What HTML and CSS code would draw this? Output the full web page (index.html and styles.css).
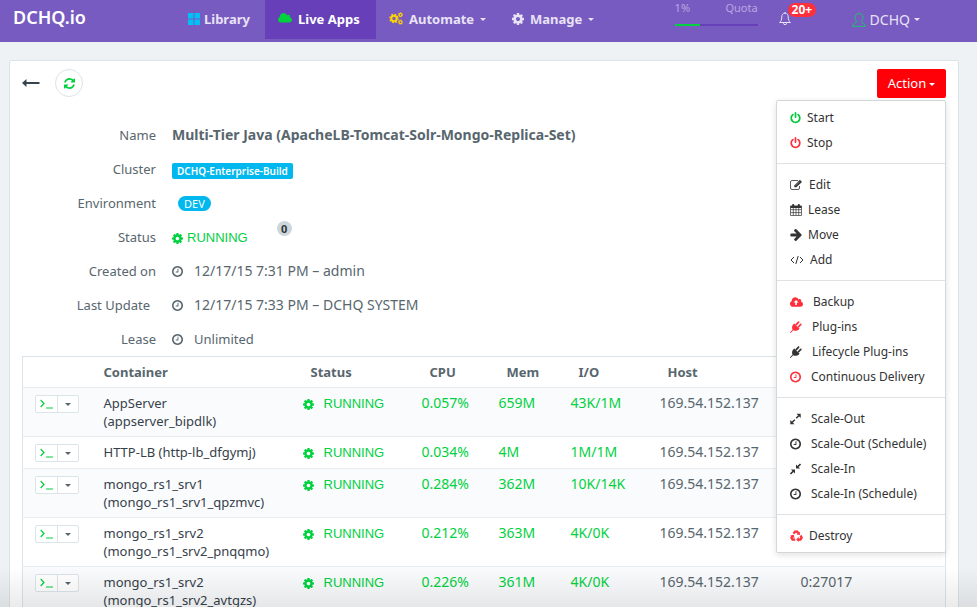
FILE: index.html
```html
<!DOCTYPE html>
<html lang="en">
<head>
<meta charset="utf-8">
<title>DCHQ.io - Live Apps</title>
<link rel="stylesheet" href="styles.css">
</head>
<body>
<svg class="sprite" aria-hidden="true">
  <symbol id="power" viewBox="128 0 1536 1792"><path d="M1664 896q0 156-61 298t-164 245-245 164-298 61-298-61-245-164-164-245-61-298q0-182 80.500-343t226.500-270q43-32 95.500-25t83.500 50q32 42 24.500 94.500t-49.500 84.500q-98 74-151.500 181t-53.500 228q0 104 40.500 198.500t109.500 163.500 163.500 109.500 198.500 40.500 198.500-40.500 163.500-109.500 109.500-163.500 40.500-198.500q0-121-53.500-228t-151.500-181q-42-32-49.500-84.500t24.500-94.500q31-43 84-50t95 25q146 109 226.500 270t80.500 343zm-640-768v640q0 52-38 90t-90 38-90-38-38-90v-640q0-52 38-90t90-38 90 38 38 90z"/></symbol>
  <symbol id="clock" viewBox="128 128 1536 1536"><path d="M1024 544v448q0 14-9 23t-23 9h-320q-14 0-23-9t-9-23v-64q0-14 9-23t23-9h224v-352q0-14 9-23t23-9h64q14 0 23 9t9 23zm416 352q0-148-73-273t-198-198-273-73-273 73-198 198-73 273 73 273 198 198 273 73 273-73 198-198 73-273zm224 0q0 209-103 385.500t-279.500 279.500-385.500 103-385.500-103-279.500-279.500-103-385.500 103-385.500 279.500-279.500 385.500-103 385.500 103 279.500 279.500 103 385.500z"/></symbol>
  <symbol id="cog" viewBox="128 128 1536 1536"><path d="M1152 896q0-106-75-181t-181-75-181 75-75 181 75 181 181 75 181-75 75-181zm512-109v222q0 12-8 23t-20 13l-185 28q-19 54-39 91 35 50 107 138 10 12 10 25t-9 23q-27 37-99 108t-94 71q-12 0-26-9l-138-108q-44 23-91 38-16 136-29 186-7 28-36 28h-222q-14 0-24.500-8.500t-11.500-21.500l-28-184q-49-16-90-37l-141 107q-10 9-25 9-14 0-25-11-126-114-165-168-7-10-7-23 0-12 8-23 15-21 51-66.500t54-70.500q-27-50-41-99l-183-27q-13-2-21-12.500t-8-23.500v-222q0-12 8-23t19-13l186-28q14-46 39-92-40-57-107-138-10-12-10-24 0-10 9-23 26-36 98.500-107.500t94.500-71.500q13 0 26 10l138 107q44-23 91-38 16-136 29-186 7-28 36-28h222q14 0 24.500 8.500t11.500 21.500l28 184q49 16 90 37l142-107q9-9 24-9 13 0 25 10 129 119 165 170 7 8 7 22 0 12-8 23-15 21-51 66.500t-54 70.500q26 50 41 98l183 28q13 2 21 12.500t8 23.500z"/></symbol>
  <symbol id="refresh" viewBox="128 128 1536 1536"><path d="M1639 1056q0 5-1 7-64 268-268 434.500t-478 166.500q-146 0-282.500-55t-243.500-157l-129 129q-19 19-45 19t-45-19-19-45v-448q0-26 19-45t45-19h448q26 0 45 19t19 45-19 45l-137 137q71 66 161 102t187 36q134 0 250-65t186-179q11-17 53-117 8-23 30-23h192q13 0 22.500 9.500t9.500 22.500zm25-800v448q0 26-19 45t-45 19h-448q-26 0-45-19t-19-45 19-45l138-138q-148-137-349-137-134 0-250 65t-186 179q-11 17-53 117-8 23-30 23h-199q-13 0-22.500-9.500t-9.500-22.500v-7q65-268 270-434.500t480-166.500q146 0 284 55.500t245 156.500l130-129q19-19 45-19t45 19 19 45z"/></symbol>
  <symbol id="arrow" viewBox="120 180 1490 1570"><path d="M1600 960q0 54-37 91l-651 651q-39 37-91 37-51 0-90-37l-75-75q-38-38-38-91t38-91l293-293h-704q-52 0-84.500-37.500t-32.500-90.500v-128q0-53 32.500-90.500t84.500-37.500h704l-293-294q-38-36-38-90t38-90l75-75q38-38 90-38 53 0 91 38l651 651q37 35 37 90z"/></symbol>
  <symbol id="cloud" viewBox="64 384 1920 1152"><path d="M1984 1152q0 159-112.500 271.500t-271.500 112.500h-1088q-185 0-316.500-131.500t-131.500-316.500q0-132 71-241.500t187-163.500q-2-28-2-43 0-212 150-362t362-150q158 0 286.500 88t187.500 230q70-62 166-62 106 0 181 75t75 181q0 75-41 138 129 30 213 134.500t84 239.500z" transform="translate(0 102) scale(1 .92)"/></symbol>
  <symbol id="upload" viewBox="64 128 1920 1408"><path fill-rule="evenodd" d="M1984 1152q0 159-112.500 271.500t-271.500 112.500h-1088q-185 0-316.500-131.500t-131.500-316.500q0-132 71-241.500t187-163.500q-2-28-2-43 0-212 150-362t362-150q158 0 286.500 88t187.500 230q70-62 166-62 106 0 181 75t75 181q0 75-41 138 129 30 213 134.500t84 239.500zM960 520L590 900h250v380h240V900h250z"/></symbol>
  <symbol id="edit" viewBox="0 0 13 12"><path d="M9.500 7v2a1.500 1.500 0 0 1-1.500 1.500H2A1.500 1.500 0 0 1 .500 9V3A1.500 1.500 0 0 1 2 1.500h6" fill="none" stroke="currentColor" stroke-width=".8"/><path d="M4.300 8.300V6.400L9.900.800 12 2.900 6.300 8.300z"/><path d="M5.700 6.600 9.700 2.600" stroke="#fff" stroke-width=".4"/></symbol>
  <symbol id="calendar" viewBox="0 0 12 12"><path d="M.500 2.200h11v9.300H.500zM.500 5.700h11M.500 8.600h11M3.300 4v7.500M6 4v7.500M8.700 4v7.500" fill="none" stroke="currentColor" stroke-width=".7"/><path d="M.500 1.700h11v2.300H.500z"/><rect x="2.200" width="2" height="3.500" rx=".8"/><rect x="7.800" width="2" height="3.500" rx=".8"/></symbol>
  <symbol id="code" viewBox="0 0 14 12"><path d="M4 3 1 6l3 3M10 3l3 3-3 3M8.200 2 5.800 10" fill="none" stroke="currentColor"/></symbol>
  <symbol id="plug" viewBox="0 0 12 12"><path d="M4.300 2.500 9.500 7.700C8 9.800 5.200 10.400 3.200 9.300L.8 11.700 0 11.900.300 11 2.500 8.700C1.500 6.600 2.200 4 4.300 2.500zM5.300 3.300 8 .6a.8.8 0 0 1 1.200 1.200L6.700 4.400zM7.600 5.400 10.200 2.800a.8.8 0 0 1 1.200 1.200L8.700 6.700z"/></symbol>
  <symbol id="expand" viewBox="0 0 11 11"><path d="M6.500.300H10.700V4.500zM.300 6.500V10.700H4.500z"/><path d="M2 9 4.800 6.200M6.200 4.800 9 2" stroke="currentColor" stroke-width="1.500"/></symbol>
  <symbol id="compress" viewBox="0 0 11 11"><path d="M6 .9V5h4.100zM5 10.100V6H.9z"/><path d="M.500 10.500 3.500 7.500M7.500 3.500 10.500.500" stroke="currentColor" stroke-width="1.600"/></symbol>
  <symbol id="recycle" viewBox="0 0 13 12"><g fill="none" stroke="currentColor" stroke-width="2.400"><path d="M3.600 3.600 5 1.600h2.200L8.300 3.200M10.600 5.400l1 2.200-1.200 2H8M5.200 9.600H2.600L1.500 7.700l.7-1.500"/></g><path d="M9.900 1.700v3.400L6.600 4.500zM8.700 7v5L6.200 9.600zM.300 5.600l3.400-.8.900 3.400z"/></symbol>
  <symbol id="cogs" viewBox="0 0 14 13"><g fill="none" stroke="currentColor"><circle cx="5" cy="6.500" r="2.700" stroke-width="2"/><circle cx="5" cy="6.500" r="4.100" stroke-width="1.400" stroke-dasharray="1.700 1.520"/><circle cx="11.500" cy="2.800" r="1.500" stroke-width="1.200"/><circle cx="11.500" cy="2.800" r="2.200" stroke-width=".6" stroke-dasharray="1 .73"/><circle cx="11.500" cy="10.200" r="1.500" stroke-width="1.200"/><circle cx="11.500" cy="10.200" r="2.200" stroke-width=".6" stroke-dasharray="1 .73"/></g></symbol>
  <symbol id="prompt" viewBox="0 0 13 10"><path d="M.700 1 4 4.500.700 8M6 9h7" fill="none" stroke="currentColor" stroke-width="1.200"/></symbol>
</svg>

<header class="topbar">
  <a class="brand" href="#">DCHQ.io</a>
  <nav class="nav" aria-label="Main">
    <a class="nav-item nav-library" href="#"><svg class="icon-windows" viewBox="0 0 12 12"><path d="M0 0h5.500v5.500H0zM6.500 0H12v5.500H6.500zM0 6.500h5.500V12H0zM6.500 6.500H12V12H6.500z"/></svg>Library</a>
    <a class="nav-item nav-apps active" href="#"><svg class="icon-cloud"><use href="#cloud"/></svg>Live Apps</a>
    <a class="nav-item nav-automate" href="#"><svg class="icon-cogs"><use href="#cogs"/></svg>Automate<span class="caret"></span></a>
    <a class="nav-item nav-manage" href="#"><svg class="icon"><use href="#cog"/></svg>Manage<span class="caret"></span></a>
  </nav>
  <div class="account">
    <div class="quota">
      <div class="quota-text"><span>1%</span><span>Quota</span></div>
      <div class="quota-bar"><div class="quota-used"></div></div>
    </div>
    <a class="alerts" href="#" aria-label="Alerts"><svg class="icon-bell" viewBox="0 0 12 14"><path d="M6 1.200C3.700 1.200 2.800 3 2.800 5c0 3-.9 4.400-2.200 5.500h10.800C10.100 9.400 9.200 8 9.200 5c0-2-.9-3.800-3.200-3.800zM4.500 11.200a1.500 1.500 0 0 0 3 0M6 0v1.200" fill="none" stroke="currentColor"/></svg><span class="alert-count">20+</span></a>
    <a class="user" href="#"><svg class="icon-user" viewBox="0 0 14 14"><path d="M5 8.600C3.700 7.300 3 6 3 4.200 3 2 4.700.600 7 .600s4 1.400 4 3.600c0 1.800-.7 3.100-2 4.400.1 1 4.300 1.600 4.400 4.800H.600C.700 10.200 4.900 9.600 5 8.600z" fill="none" stroke="currentColor"/></svg>DCHQ<span class="caret"></span></a>
  </div>
</header>

<main class="card">
  <div class="toolbar">
    <button class="back" type="button" aria-label="Back"><svg viewBox="0 0 18 8"><path d="M0 4 4.500 0v2.900H17.500v2.200H4.500V8z"/></svg></button>
    <button class="reload" type="button" aria-label="Refresh"><svg class="icon"><use href="#refresh"/></svg></button>
    <div class="action">
      <button class="action-button" type="button">Action<span class="caret"></span></button>
      <div class="menu">
        <div class="menu-group">
          <button type="button"><svg class="w11 ok"><use href="#power"/></svg>Start</button>
          <button type="button"><svg class="w11 danger"><use href="#power"/></svg>Stop</button>
        </div>
        <div class="menu-group">
          <button type="button"><svg class="w13"><use href="#edit"/></svg>Edit</button>
          <button type="button"><svg class="w12"><use href="#calendar"/></svg>Lease</button>
          <button type="button"><svg class="w12"><use href="#arrow"/></svg>Move</button>
          <button type="button"><svg class="w14"><use href="#code"/></svg>Add</button>
        </div>
        <div class="menu-group wide">
          <button type="button"><svg class="w13 danger"><use href="#upload"/></svg>Backup</button>
          <button type="button"><svg class="w12 danger"><use href="#plug"/></svg>Plug-ins</button>
          <button type="button"><svg class="w12"><use href="#plug"/></svg>Lifecycle Plug-ins</button>
          <button type="button"><svg class="w11 danger"><use href="#clock"/></svg>Continuous Delivery</button>
        </div>
        <div class="menu-group wide">
          <button type="button"><svg class="w11"><use href="#expand"/></svg>Scale-Out</button>
          <button type="button"><svg class="w11"><use href="#clock"/></svg>Scale-Out (Schedule)</button>
          <button type="button"><svg class="w11"><use href="#compress"/></svg>Scale-In</button>
          <button type="button"><svg class="w11"><use href="#clock"/></svg>Scale-In (Schedule)</button>
        </div>
        <div class="menu-group">
          <button type="button"><svg class="w13 danger"><use href="#recycle"/></svg>Destroy</button>
        </div>
      </div>
    </div>
  </div>

  <dl class="details">
    <dt>Name</dt><dd class="name">Multi-Tier Java (ApacheLB-Tomcat-Solr-Mongo-Replica-Set)</dd>
    <dt>Cluster</dt><dd><span class="cluster">DCHQ-Enterprise-Build</span></dd>
    <dt>Environment</dt><dd><span class="env">DEV</span></dd>
    <dt>Status</dt><dd class="state"><svg class="icon"><use href="#cog"/></svg><span>RUNNING</span><span class="count">0</span></dd>
    <dt>Created on</dt><dd class="time stamp"><svg class="icon"><use href="#clock"/></svg>12/17/15 7:31 PM – admin</dd>
    <dt class="trail">Last Update</dt><dd class="time stamp"><svg class="icon"><use href="#clock"/></svg>12/17/15 7:33 PM – DCHQ SYSTEM</dd>
    <dt>Lease</dt><dd class="time"><svg class="icon"><use href="#clock"/></svg>Unlimited</dd>
  </dl>

  <table class="containers">
    <colgroup><col class="c-tools"><col class="c-name"><col class="c-status"><col class="c-cpu"><col class="c-mem"><col class="c-io"><col class="c-host"><col></colgroup>
    <thead>
      <tr><th></th><th class="first">Container</th><th>Status</th><th>CPU</th><th>Mem</th><th>I/O</th><th>Host</th><th></th></tr>
    </thead>
    <tbody>
      <tr><td><div class="tools"><button type="button" aria-label="Terminal"><svg><use href="#prompt"/></svg></button><button type="button" aria-label="More"><span class="caret"></span></button></div></td><td class="cname">AppServer<br>(appserver_bipdlk)</td><td class="run"><svg class="icon"><use href="#cog"/></svg>RUNNING</td><td class="num">0.057%</td><td class="num">659M</td><td class="num">43K/1M</td><td>169.54.152.137</td><td></td></tr>
      <tr><td><div class="tools"><button type="button" aria-label="Terminal"><svg><use href="#prompt"/></svg></button><button type="button" aria-label="More"><span class="caret"></span></button></div></td><td class="cname">HTTP-LB (http-lb_dfgymj)</td><td class="run"><svg class="icon"><use href="#cog"/></svg>RUNNING</td><td class="num">0.034%</td><td class="num">4M</td><td class="num">1M/1M</td><td>169.54.152.137</td><td></td></tr>
      <tr><td><div class="tools"><button type="button" aria-label="Terminal"><svg><use href="#prompt"/></svg></button><button type="button" aria-label="More"><span class="caret"></span></button></div></td><td class="cname">mongo_rs1_srv1<br>(mongo_rs1_srv1_qpzmvc)</td><td class="run"><svg class="icon"><use href="#cog"/></svg>RUNNING</td><td class="num">0.284%</td><td class="num">362M</td><td class="num">10K/14K</td><td>169.54.152.137</td><td></td></tr>
      <tr><td><div class="tools"><button type="button" aria-label="Terminal"><svg><use href="#prompt"/></svg></button><button type="button" aria-label="More"><span class="caret"></span></button></div></td><td class="cname">mongo_rs1_srv2<br>(mongo_rs1_srv2_pnqqmo)</td><td class="run"><svg class="icon"><use href="#cog"/></svg>RUNNING</td><td class="num">0.212%</td><td class="num">363M</td><td class="num">4K/0K</td><td>169.54.152.137</td><td></td></tr>
      <tr><td><div class="tools"><button type="button" aria-label="Terminal"><svg><use href="#prompt"/></svg></button><button type="button" aria-label="More"><span class="caret"></span></button></div></td><td class="cname">mongo_rs1_srv2<br>(mongo_rs1_srv2_avtgzs)</td><td class="run"><svg class="icon"><use href="#cog"/></svg>RUNNING</td><td class="num">0.226%</td><td class="num">361M</td><td class="num">4K/0K</td><td>169.54.152.137</td><td>0:27017</td></tr>
    </tbody>
  </table>
</main>
</body>
</html>
```
FILE: styles.css
```css
* { box-sizing: border-box; }

body {
  margin: 0;
  height: 100vh;
  overflow: hidden;
  background: #eef2f4;
  color: #58666e;
  font: 13px/18px "Noto Sans", "Open Sans", sans-serif;
}

/* soft edge along the bottom of the window */
body::after {
  content: "";
  position: fixed;
  inset: auto 0 0;
  height: 40px;
  background: linear-gradient(rgba(0, 0, 0, 0), rgba(0, 0, 0, .08));
  pointer-events: none;
}

a { color: inherit; text-decoration: none; }

button {
  margin: 0;
  padding: 0;
  border: 0;
  background: none;
  color: inherit;
  font: inherit;
}

svg { fill: currentColor; flex: none; }
.sprite { position: absolute; width: 0; height: 0; }
.icon { width: 12px; height: 12px; }

.caret {
  flex: none;
  border: 3px solid transparent;
  border-top-color: currentColor;
  border-bottom: 0;
}

/* top bar */
.topbar {
  display: flex;
  height: 42px;
  padding: 0 57px 0 13px;
  background: #785bc0;
  color: #e8e2f5;
}

.brand {
  width: 162px;
  padding-top: 5px;
  color: #fff;
  font-size: 18px;
  font-weight: 600;
  line-height: 24px;
}

.nav { display: flex; height: 39px; font-weight: 700; }

.nav-item {
  display: flex;
  align-items: center;
  gap: 4px;
  padding: 0 0 2px 13px;
}

.nav-library { width: 90px; }
.nav-apps { width: 111px; gap: 6px; }
.nav-automate { width: 123px; gap: 6px; }
.nav-manage { width: 100px; gap: 6px; }
.nav-item .caret { margin-top: 2px; }
.nav-item.active { background: #673fb8; color: #fff; }
.icon-windows { width: 12px; height: 12px; color: #00c0f5; }
.icon-cloud { width: 14px; height: 11px; color: #00d13f; }
.icon-cogs { width: 14px; height: 13px; color: #ffd400; }

.account { display: flex; margin-left: auto; }
.quota { width: 83px; font-size: 11px; line-height: 16px; color: #b9a8e0; }
.quota-text { display: flex; justify-content: space-between; }
.quota-bar { height: 2px; margin-top: 8px; background: #673fb8; }
.quota-used { width: 30%; height: 2px; background: #00d13f; }

.alerts { position: relative; width: 40px; margin-left: 21px; padding-top: 12px; }
.icon-bell { width: 12px; height: 14px; }

.alert-count {
  position: absolute;
  top: 3px;
  left: 9px;
  padding: 0 4px;
  border-radius: 7px;
  background: #ff2f3c;
  color: #fff;
  font-size: 12px;
  font-weight: 700;
  line-height: 14px;
}

.user { display: flex; align-items: center; gap: 4px; height: 39px; margin-left: 33px; font-size: 14px; }
.icon-user { width: 14px; height: 14px; color: #1fc46b; }

/* application card */
.card {
  margin: 18px 18px 0 9px;
  padding: 8px 12px 20px;
  border: 1px solid #dbe4e8;
  border-radius: 2px;
  background: #fff;
}

.toolbar { display: flex; align-items: flex-start; height: 29px; margin-bottom: 20px; }
.back { display: flex; width: 18px; height: 28px; align-items: center; color: #36454f; }
.back svg { width: 18px; height: 8px; }

.reload {
  display: flex;
  width: 28px;
  height: 28px;
  margin-left: 15px;
  align-items: center;
  justify-content: center;
  border: 1px solid #dbe4e8;
  border-radius: 50%;
  color: #00d13f;
}

.reload .icon, .details .icon, .run .icon { width: 11px; height: 11px; }

.action { position: relative; margin-left: auto; }

.action-button {
  display: flex;
  width: 69px;
  height: 29px;
  padding-bottom: 1px;
  align-items: center;
  justify-content: center;
  gap: 3px;
  border-radius: 2px;
  background: #ff0008;
  color: #fff;
}

.action-button .caret { margin-top: 2px; }

.menu {
  position: absolute;
  z-index: 1;
  top: 31px;
  right: 0;
  width: 170px;
  padding: 4px 0;
  border: 1px solid #d4d7d9;
  border-radius: 2px;
  background: #fff;
  box-shadow: 0 2px 6px rgba(0, 0, 0, .12);
  color: #333;
}

.menu-group + .menu-group { margin-top: 8px; padding-top: 8px; border-top: 1px solid #dee2e4; }

.menu button {
  display: flex;
  width: 100%;
  height: 25px;
  padding: 1px 0 0 13px;
  align-items: center;
  gap: 6px;
  font-size: 12px;
  white-space: nowrap;
}

.menu .wide button { gap: 10px; }
.menu svg { height: 12px; }
.w11 { width: 11px; }
.w12 { width: 12px; }
.w13 { width: 13px; }
.w14 { width: 14px; }
.ok { color: #00c93c; }
.danger { color: #ff2f3c; }

.details {
  display: grid;
  grid-template-columns: 134px 1fr;
  grid-auto-rows: 34px;
  column-gap: 16px;
  margin: 0;
  align-items: center;
}

.details dt { text-align: right; }
.details .trail { padding-right: 6px; }
.details dd { display: flex; margin: 0; align-items: center; }
.details .name { font-size: 14px; font-weight: 700; }
.time { gap: 11px; }
.stamp { font-size: 14px; }

.cluster {
  margin-top: 4px;
  padding: 0 5px;
  border-radius: 2px;
  background: #00b7ee;
  color: #fff;
  font-size: 10px;
  font-weight: 600;
  line-height: 16px;
}

.env {
  margin-left: 6px;
  padding: 0 6px;
  border-radius: 8px;
  background: #00b7ee;
  color: #fff;
  font-size: 11px;
  line-height: 15px;
}

.state, .run { color: #00d13f; font-family: "Liberation Sans", Arial, sans-serif; }
.details .state { gap: 4px; padding-top: 2px; }

.count {
  width: 15px;
  margin: 0 0 20px 25px;
  border-radius: 50%;
  background: #cbd7dd;
  color: #333;
  font: 700 11px/15px "Noto Sans", "Open Sans", sans-serif;
  text-align: center;
}

/* containers table */
.containers {
  width: 100%;
  table-layout: fixed;
  border-collapse: collapse;
  border: 1px solid #dbe4e8;
}

.c-tools { width: 73px; }
.c-name { width: 199px; }
.c-status { width: 119px; }
.c-cpu { width: 77px; }
.c-mem { width: 72px; }
.c-io { width: 89px; }
.c-host { width: 141px; }

.containers th, .containers td {
  padding: 6px 0 6px 8px;
  border-bottom: 1px solid #e6ecef;
  text-align: left;
  vertical-align: top;
}

.containers th { padding-left: 16px; }
.containers th.first { padding-left: 8px; }
.containers td { font-size: 14px; }
.containers tbody tr:nth-child(odd) { background: #fafbfd; }
.containers .cname { color: #36414a; font-size: 13px; }
.containers .num { color: #00d13f; }
.containers .run { padding: 7px 0 5px 8px; color: #00d13f; font-size: 13px; }
.run svg { margin-right: 10px; vertical-align: -2px; }

.tools { display: flex; width: 44px; height: 18px; margin: 1px 0 0 4px; border: 1px solid #dbe4e8; border-radius: 2px; background: #fff; }
.tools button { display: flex; flex: 1; align-items: center; justify-content: center; }
.tools button + button { border-left: 1px solid #dbe4e8; }
.tools svg { width: 13px; height: 10px; color: #00d13f; }
```
